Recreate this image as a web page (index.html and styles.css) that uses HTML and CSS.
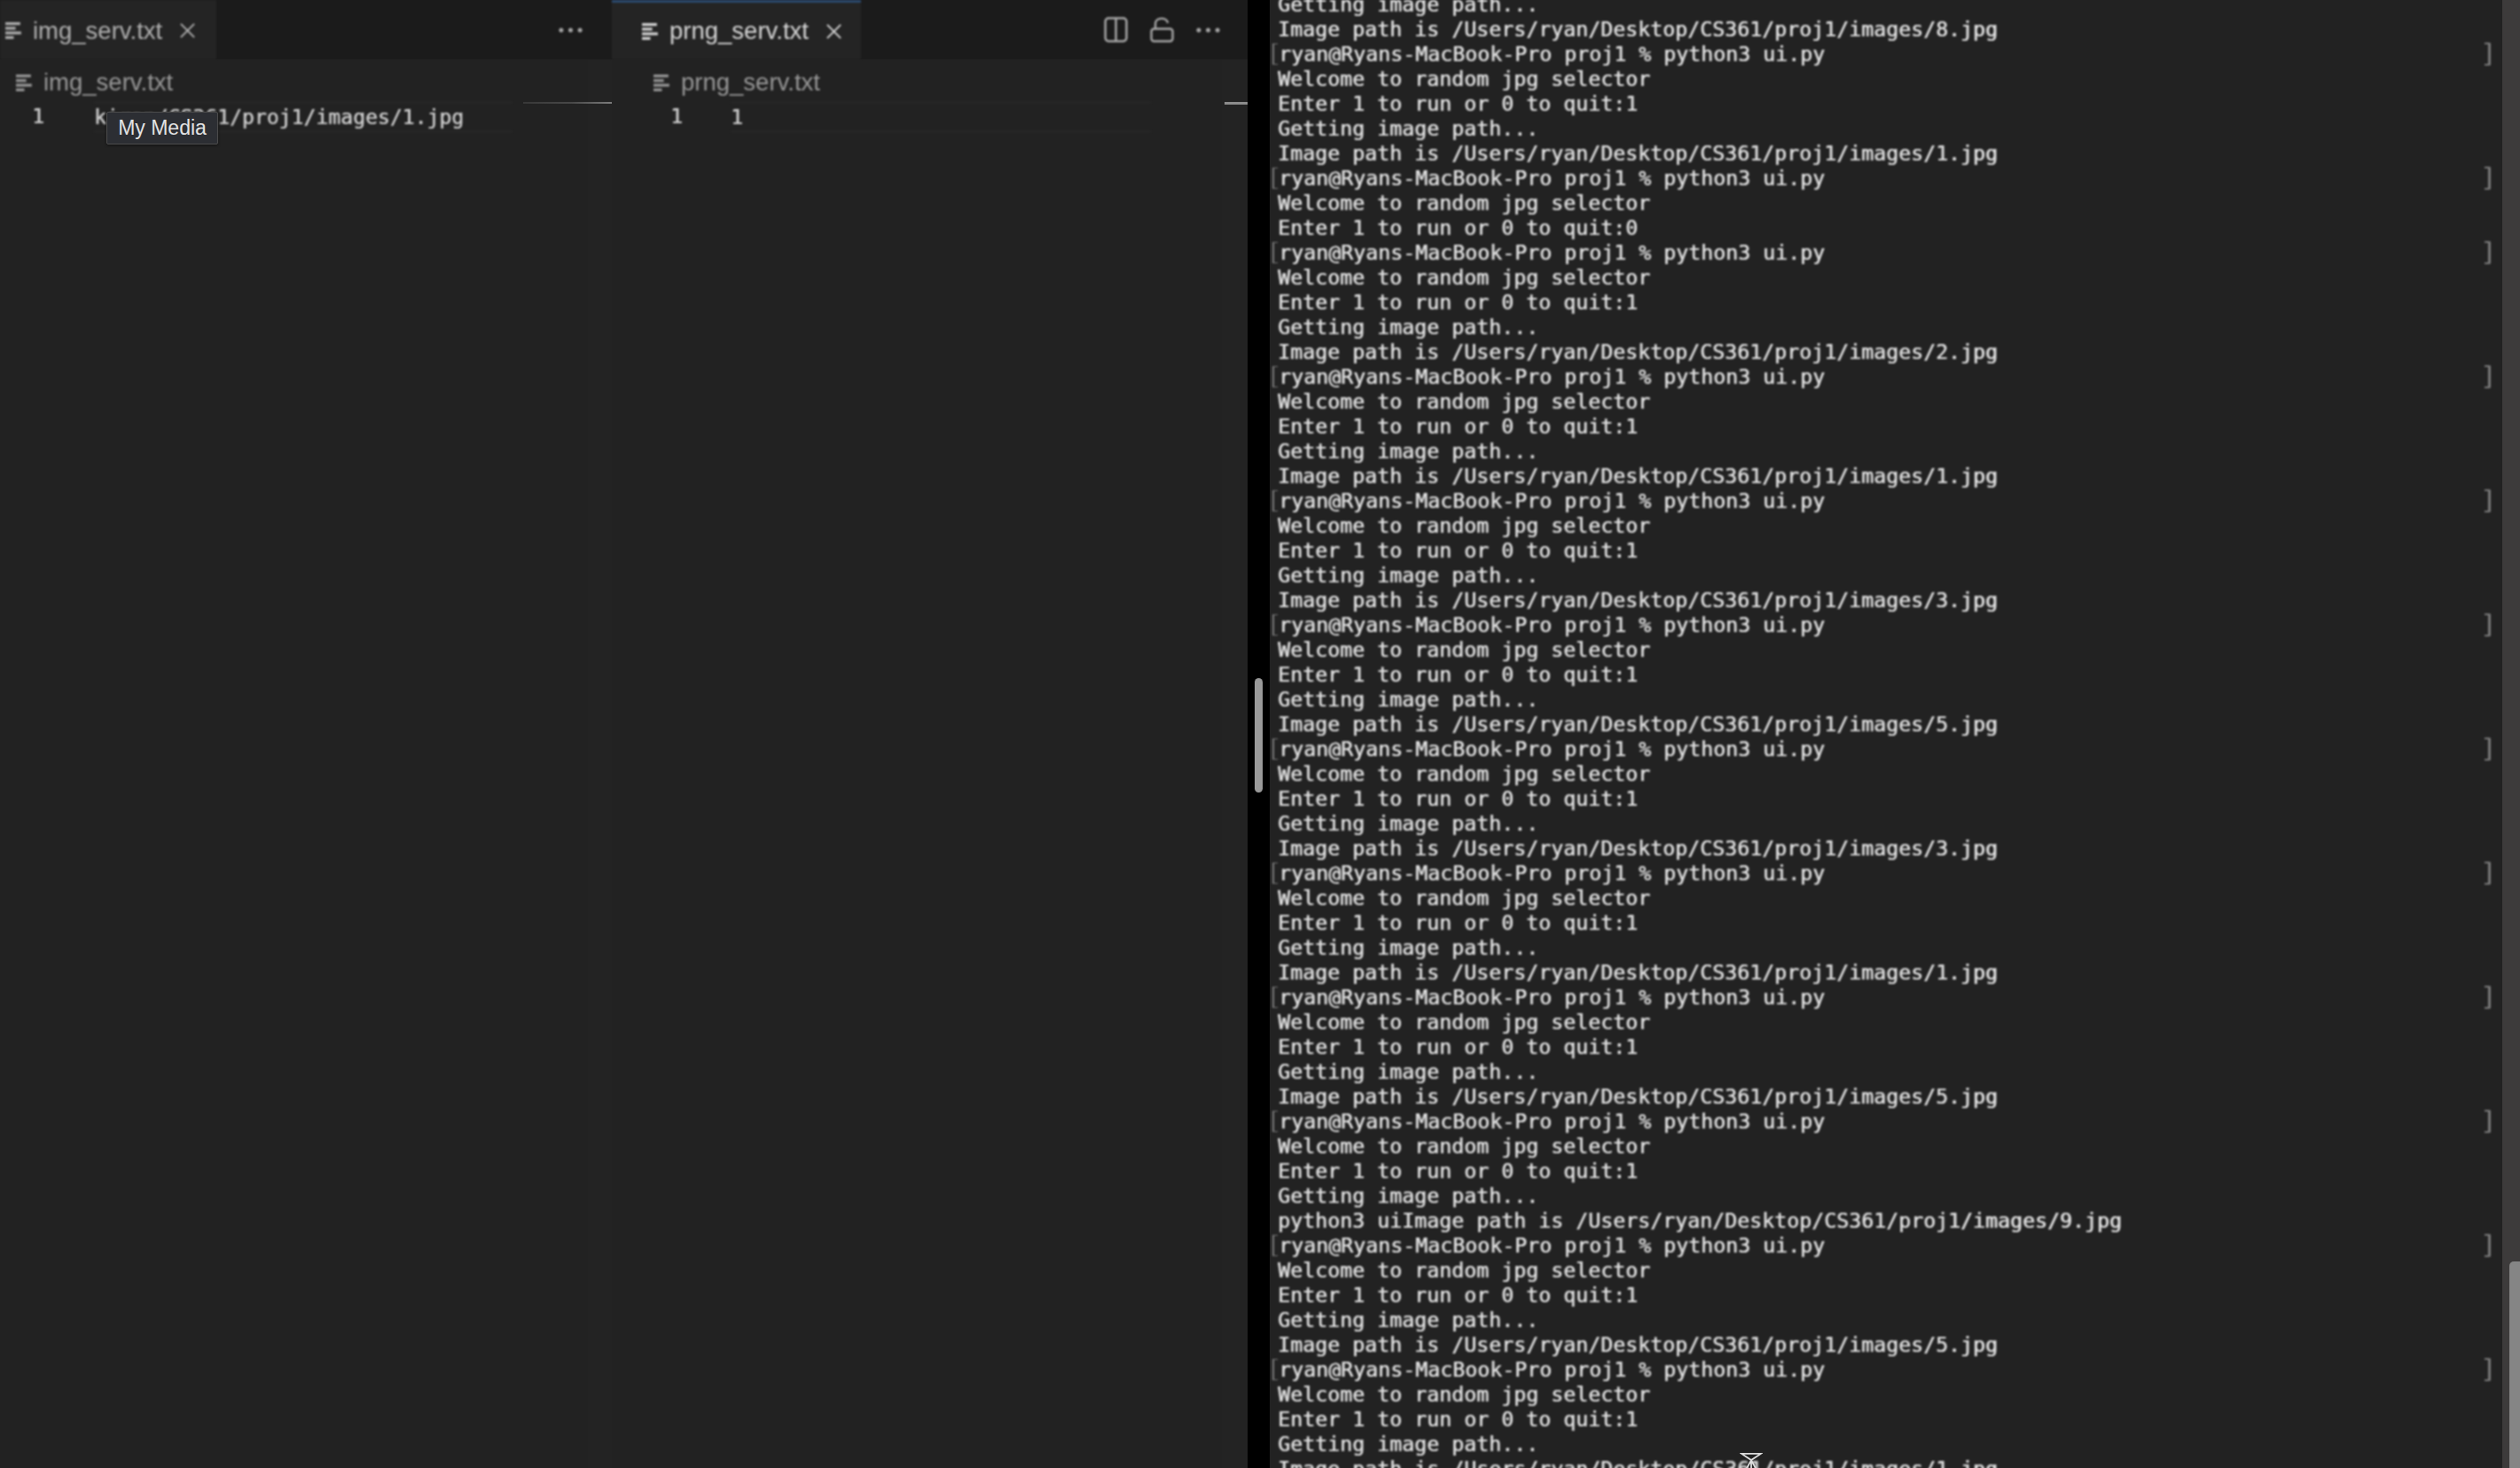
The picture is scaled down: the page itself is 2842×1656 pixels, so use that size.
FILE: index.html
```html
<!DOCTYPE html>
<html lang="en">
<head>
<meta charset="utf-8">
<title>Editor and terminal</title>
<link rel="stylesheet" href="styles.css">
</head>
<body>
<svg class="defs" width="0" height="0" aria-hidden="true">
  <symbol id="file" viewBox="0 0 18 20">
    <rect x="0" y="1" width="16" height="3"/><rect x="0" y="6" width="11" height="3"/><rect x="0" y="11" width="17" height="3"/><rect x="0" y="16" width="9" height="3"/>
  </symbol>
  <symbol id="close" viewBox="0 0 20 20">
    <path d="M2 2 L18 18 M18 2 L2 18" fill="none" stroke="currentColor" stroke-width="2"/>
  </symbol>
  <symbol id="dots" viewBox="0 0 28 6">
    <circle cx="3" cy="3" r="2.6"/><circle cx="14" cy="3" r="2.6"/><circle cx="25" cy="3" r="2.6"/>
  </symbol>
</svg>
<div class="app">
  <section class="pane pane-left">
    <div class="tabbar">
      <div class="tab tab-left">
        <svg class="file-icon"><use href="#file"/></svg>
        <span class="tab-name">img_serv.txt</span>
        <svg class="close-icon"><use href="#close"/></svg>
      </div>
      <div class="actions actions-left">
        <svg class="dots-icon"><use href="#dots"/></svg>
      </div>
    </div>
    <div class="crumb crumb-left">
      <svg class="file-icon"><use href="#file"/></svg>
      <span>img_serv.txt</span>
    </div>
    <div class="code code-left">
      <span class="num">1</span>
      <span class="text">kiran/CS361/proj1/images/1.jpg</span>
      <span class="marker"></span>
    </div>
    <div class="tooltip">My Media</div>
  </section>

  <section class="pane pane-right">
    <div class="tabbar">
      <div class="tab tab-active">
        <svg class="file-icon"><use href="#file"/></svg>
        <span class="tab-name">prng_serv.txt</span>
        <svg class="close-icon"><use href="#close"/></svg>
      </div>
      <div class="actions">
        <svg class="split-icon" viewBox="0 0 26 28"><rect x="1.5" y="1.5" width="23" height="25" rx="3.5"/><path d="M13 2V26"/></svg>
        <svg class="lock-icon" viewBox="0 0 27 28"><rect x="1.5" y="13" width="24" height="14" rx="3"/><path d="M6 13V7.5C6 -0.5 19 -0.5 20 6.5"/></svg>
        <svg class="dots-icon"><use href="#dots"/></svg>
      </div>
    </div>
    <div class="crumb crumb-right">
      <svg class="file-icon"><use href="#file"/></svg>
      <span>prng_serv.txt</span>
    </div>
    <div class="code code-right">
      <span class="num">1</span>
      <span class="text">1</span>
      <span class="marker marker-short"></span>
    </div>
  </section>

  <div class="divider"><div class="divider-thumb"></div></div>

  <main class="terminal">
    <div class="lines">
      <div class="line">Getting image path...</div>
      <div class="line">Image path is /Users/ryan/Desktop/CS361/proj1/images/8.jpg</div>
      <div class="line prompt">ryan@Ryans-MacBook-Pro proj1 % python3 ui.py</div>
      <div class="line">Welcome to random jpg selector</div>
      <div class="line">Enter 1 to run or 0 to quit:1</div>
      <div class="line">Getting image path...</div>
      <div class="line">Image path is /Users/ryan/Desktop/CS361/proj1/images/1.jpg</div>
      <div class="line prompt">ryan@Ryans-MacBook-Pro proj1 % python3 ui.py</div>
      <div class="line">Welcome to random jpg selector</div>
      <div class="line">Enter 1 to run or 0 to quit:0</div>
      <div class="line prompt">ryan@Ryans-MacBook-Pro proj1 % python3 ui.py</div>
      <div class="line">Welcome to random jpg selector</div>
      <div class="line">Enter 1 to run or 0 to quit:1</div>
      <div class="line">Getting image path...</div>
      <div class="line">Image path is /Users/ryan/Desktop/CS361/proj1/images/2.jpg</div>
      <div class="line prompt">ryan@Ryans-MacBook-Pro proj1 % python3 ui.py</div>
      <div class="line">Welcome to random jpg selector</div>
      <div class="line">Enter 1 to run or 0 to quit:1</div>
      <div class="line">Getting image path...</div>
      <div class="line">Image path is /Users/ryan/Desktop/CS361/proj1/images/1.jpg</div>
      <div class="line prompt">ryan@Ryans-MacBook-Pro proj1 % python3 ui.py</div>
      <div class="line">Welcome to random jpg selector</div>
      <div class="line">Enter 1 to run or 0 to quit:1</div>
      <div class="line">Getting image path...</div>
      <div class="line">Image path is /Users/ryan/Desktop/CS361/proj1/images/3.jpg</div>
      <div class="line prompt">ryan@Ryans-MacBook-Pro proj1 % python3 ui.py</div>
      <div class="line">Welcome to random jpg selector</div>
      <div class="line">Enter 1 to run or 0 to quit:1</div>
      <div class="line">Getting image path...</div>
      <div class="line">Image path is /Users/ryan/Desktop/CS361/proj1/images/5.jpg</div>
      <div class="line prompt">ryan@Ryans-MacBook-Pro proj1 % python3 ui.py</div>
      <div class="line">Welcome to random jpg selector</div>
      <div class="line">Enter 1 to run or 0 to quit:1</div>
      <div class="line">Getting image path...</div>
      <div class="line">Image path is /Users/ryan/Desktop/CS361/proj1/images/3.jpg</div>
      <div class="line prompt">ryan@Ryans-MacBook-Pro proj1 % python3 ui.py</div>
      <div class="line">Welcome to random jpg selector</div>
      <div class="line">Enter 1 to run or 0 to quit:1</div>
      <div class="line">Getting image path...</div>
      <div class="line">Image path is /Users/ryan/Desktop/CS361/proj1/images/1.jpg</div>
      <div class="line prompt">ryan@Ryans-MacBook-Pro proj1 % python3 ui.py</div>
      <div class="line">Welcome to random jpg selector</div>
      <div class="line">Enter 1 to run or 0 to quit:1</div>
      <div class="line">Getting image path...</div>
      <div class="line">Image path is /Users/ryan/Desktop/CS361/proj1/images/5.jpg</div>
      <div class="line prompt">ryan@Ryans-MacBook-Pro proj1 % python3 ui.py</div>
      <div class="line">Welcome to random jpg selector</div>
      <div class="line">Enter 1 to run or 0 to quit:1</div>
      <div class="line">Getting image path...</div>
      <div class="line">python3 uiImage path is /Users/ryan/Desktop/CS361/proj1/images/9.jpg</div>
      <div class="line prompt">ryan@Ryans-MacBook-Pro proj1 % python3 ui.py</div>
      <div class="line">Welcome to random jpg selector</div>
      <div class="line">Enter 1 to run or 0 to quit:1</div>
      <div class="line">Getting image path...</div>
      <div class="line">Image path is /Users/ryan/Desktop/CS361/proj1/images/5.jpg</div>
      <div class="line prompt">ryan@Ryans-MacBook-Pro proj1 % python3 ui.py</div>
      <div class="line">Welcome to random jpg selector</div>
      <div class="line">Enter 1 to run or 0 to quit:1</div>
      <div class="line">Getting image path...</div>
      <div class="line">Image path is /Users/ryan/Desktop/CS361/proj1/images/1.jpg</div>
    </div>
    <svg class="ibeam" viewBox="0 0 28 20"><path d="M2 1H26L14 9ZM14 9V20M14 9L8 20M14 9L20 20"/></svg>
  </main>

  <aside class="scrollbar"><div class="scroll-thumb"></div></aside>
</div>
</body>
</html>
```

FILE: styles.css
```css
* { box-sizing: border-box; }

html, body {
  margin: 0;
  height: 100%;
  background: #222222;
  overflow: hidden;
}

.defs { position: absolute; }

.app {
  display: flex;
  width: 2842px;
  height: 1656px;
  overflow: hidden;
  font-family: "Liberation Sans", Arial, sans-serif;
}

/* Editor panes */
.pane {
  position: relative;
  display: flex;
  flex-direction: column;
}

.pane-left {
  width: 690px;
  background: linear-gradient(to right, #222222 663px, #232323 663px);
}

.pane-right {
  width: 717px;
  background: linear-gradient(to right, #222222 688px, #232323 688px);
}

.tabbar {
  display: flex;
  align-items: stretch;
  height: 67px;
  background: #1b1b1b;
}

.tab {
  display: flex;
  align-items: center;
  background: #242424;
  color: #b0b0b0;
  font-size: 27.5px;
  filter: blur(0.9px);
}

.tab-left { width: 244px; padding: 2px 0 0 6px; }

.tab-active {
  width: 281px;
  padding-left: 34px;
  color: #d6d6d6;
  border-top: 3px solid #2b4a6f;
}

.tab-name { margin: 0 19px 0 12px; }

.file-icon {
  flex: none;
  width: 19px;
  height: 21px;
  fill: currentColor;
}

.close-icon {
  flex: none;
  width: 19px;
  height: 19px;
  color: inherit;
}

.actions {
  flex: 1;
  display: flex;
  align-items: center;
  justify-content: flex-end;
  gap: 25px;
  padding-right: 31px;
  color: #a8a8a8;
  filter: blur(0.8px);
}

.actions-left { padding-right: 33px; }

.dots-icon {
  width: 27px;
  height: 6px;
  fill: currentColor;
}

.split-icon, .lock-icon {
  width: 27px;
  height: 29px;
  fill: none;
  stroke: currentColor;
  stroke-width: 2.4;
}

.crumb {
  display: flex;
  align-items: center;
  gap: 12px;
  height: 48px;
  padding-top: 4px;
  color: #989898;
  font-size: 27.5px;
  filter: blur(0.9px);
}

.crumb-left { padding-left: 18px; }
.crumb-right { padding-left: 47px; }

.code {
  display: grid;
  height: 34px;
  font-family: "DejaVu Sans Mono", "Liberation Mono", monospace;
  font-size: 23.1px;
  line-height: 32px;
  color: #cfcfcf;
  text-shadow: 0.4px 0 0 currentColor;
}

.code-left { grid-template-columns: 106px 472px 1fr; }
.code-right { grid-template-columns: 134px 474px 1fr; }

.num { filter: blur(0.8px); }
.code-left .num { padding-left: 36px; }
.code-right .num { padding-left: 66px; }

.text {
  border-top: 1px solid #2c2c2c;
  border-bottom: 1px solid #2c2c2c;
  white-space: pre;
  filter: blur(0.8px);
}

.marker {
  height: 2px;
  margin-left: 12px;
  background: linear-gradient(to right, #383838, #484848 55%, #7c7c7c);
}

.marker-short {
  height: 3px;
  margin-left: 83px;
  background: #8c8c8c;
}

.tooltip {
  position: absolute;
  left: 120px;
  top: 126px;
  width: 126px;
  height: 37px;
  border: 1px solid #4c4c4c;
  border-radius: 2px;
  background: #2c2e33;
  color: #e2e2e2;
  font-size: 23px;
  line-height: 35px;
  text-align: center;
  box-shadow: 0 1px 3px rgba(0, 0, 0, 0.5);
}

/* Black sash between editors and terminal */
.divider {
  flex: none;
  width: 25px;
  padding: 765px 0 0 8px;
  background: #000;
}

.divider-thumb {
  width: 9px;
  height: 129px;
  border-radius: 5px;
  background: #9a9a9a;
  filter: blur(0.6px);
}

/* Terminal */
.terminal {
  position: relative;
  flex: 1;
  overflow: hidden;
  background: #222222;
}

.lines {
  margin-top: -9px;
  font-family: "DejaVu Sans Mono", "Liberation Mono", monospace;
  font-size: 23.25px;
  line-height: 28px;
  color: #e0e0e0;
  text-shadow: 0.6px 0 0 currentColor;
  filter: blur(0.9px);
}

.line {
  height: 28px;
  padding-left: 9px;
  white-space: pre;
}

.prompt {
  display: flex;
  align-items: center;
  padding: 0 13px 0 3px;
}

.prompt::before,
.prompt::after {
  content: "";
  flex: none;
  width: 4px;
  height: 22px;
  border: solid #7a7a7a;
}

.prompt::before {
  margin-right: 1px;
  border-width: 1px 0 1px 2px;
}

.prompt::after {
  margin-left: auto;
  border-width: 2px 3px 2px 0;
  border-radius: 0 2px 2px 0;
}

.ibeam {
  position: absolute;
  left: 530px;
  top: 1639px;
  width: 26px;
  height: 18px;
  fill: none;
  stroke: #dddddd;
  stroke-width: 2;
  filter: blur(0.5px);
}

/* Window scrollbar */
.scrollbar {
  flex: none;
  width: 20px;
  padding: 1423px 0 0 8px;
  background: #3d3b3b;
}

.scroll-thumb {
  height: 240px;
  border-radius: 5px 0 0 0;
  background: #858585;
}
```
